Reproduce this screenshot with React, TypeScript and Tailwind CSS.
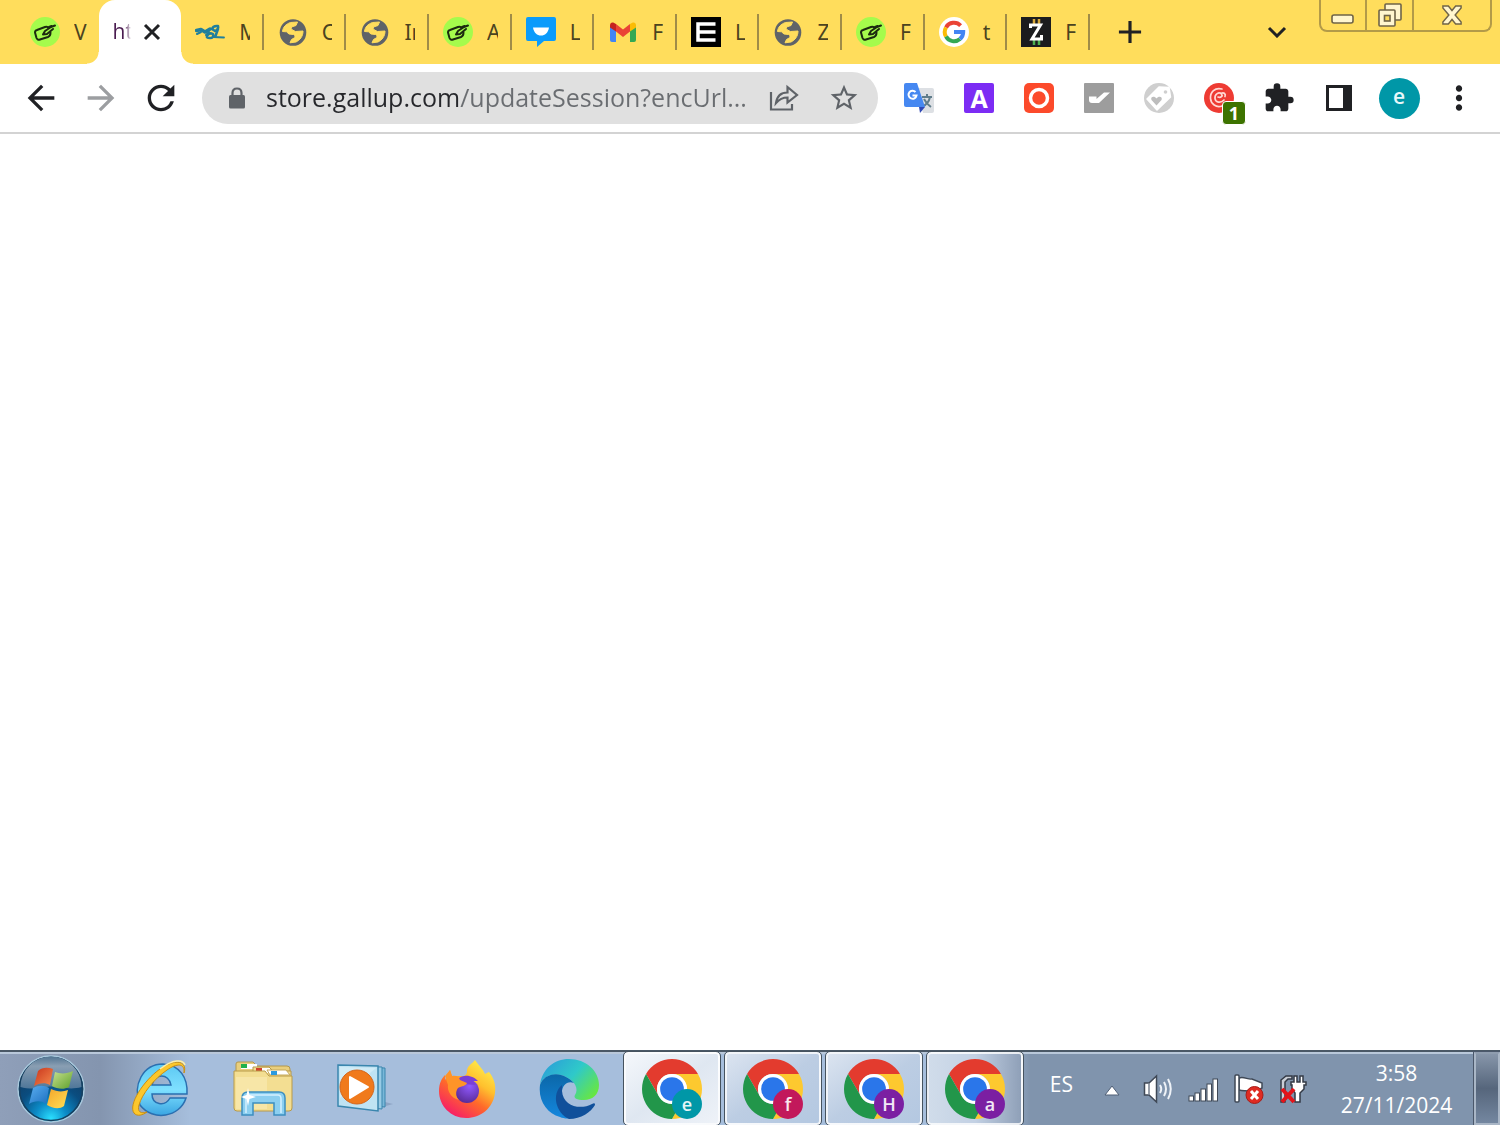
import { useState } from 'react';
import type { ReactNode } from 'react';
import { MdAdd, MdArrowBack, MdArrowForward, MdExtension, MdMoreVert, MdRefresh, MdStarBorder } from 'react-icons/md';

type IconName = 'hand' | 'wave' | 'globe' | 'chat' | 'gmail' | 'e' | 'google' | 'z';

type Tab = { id: number; icon?: IconName; title: string };

const TABS: Tab[] = [
  { id: 1, icon: 'hand', title: 'V' },
  { id: 2, title: 'ht' },
  { id: 3, icon: 'wave', title: 'M' },
  { id: 4, icon: 'globe', title: 'C' },
  { id: 5, icon: 'globe', title: 'In' },
  { id: 6, icon: 'hand', title: 'A' },
  { id: 7, icon: 'chat', title: 'L' },
  { id: 8, icon: 'gmail', title: 'F' },
  { id: 9, icon: 'e', title: 'L' },
  { id: 10, icon: 'globe', title: 'Z' },
  { id: 11, icon: 'hand', title: 'F' },
  { id: 12, icon: 'google', title: 't' },
  { id: 13, icon: 'z', title: 'F' },
];

const ACTIVE_TAB = 2;

const WINDOWS = [
  { letter: 'e', color: '#0097a7', bg: 'bg-linear-to-br from-[#f4f7fb] via-[#dfe7f1] to-[#eef2f8]' },
  { letter: 'f', color: '#c2185b', bg: 'bg-linear-to-br from-[#dbe4f0] via-[#bccde3] to-[#b4c8e1]' },
  { letter: 'H', color: '#7b1fa2', bg: 'bg-linear-to-br from-[#dbe4f0] via-[#bccde3] to-[#b4c8e1]' },
  { letter: 'a', color: '#7b1fa2', bg: 'bg-linear-to-r from-[#d0dcea] via-[#c3d1e4] to-[#8fa0b8]' },
];

function HandIcon() {
  return (
    <svg width="30" height="30" viewBox="0 0 30 30">
      <circle cx="15" cy="15" r="15" fill="#a5fb4c" />
      <path d="M5 15.500Q5 13.500 7 13L15 10Q17.500 9 18.500 11M5 15.500L6.500 21Q7.500 23.500 10 22.500L18 20Q20.500 19 20.500 15.500" fill="none" stroke="#1c2a10" strokeWidth="2" strokeLinecap="round" />
      <path d="M13 17.500L15 14L21 10L25 8.500M13 17.500L17 17L23 12M19 10L21.500 9" fill="none" stroke="#1c2a10" strokeWidth="2" strokeLinecap="round" strokeLinejoin="round" />
    </svg>
  );
}

function WaveIcon() {
  return (
    <svg width="30" height="30" viewBox="0 0 30 30" fill="none" stroke="#1f7f9c" strokeLinecap="round" strokeLinejoin="round">
      <path d="M1.500 13.500L6 12.500L10 15L15 12" strokeWidth="3.500" />
      <path d="M2 17L6 15M11 18L14 15" strokeWidth="2" />
      <path d="M12 19Q14 15 18 17Q19 21 15 21Q11 21 12 19M17 12Q18 8.500 23 9Q24 12 20 14L17 12M23 12L20.500 19" strokeWidth="2.500" />
      <path d="M18 20L29 20.500" strokeWidth="1.800" />
    </svg>
  );
}

function GlobeIcon() {
  return (
    <svg width="30" height="30" viewBox="0 0 30 30">
      <circle cx="15" cy="15.500" r="13.300" fill="#5f6368" />
      <path
        d="M12.500 5.500L19.500 5L18 8.500L13.500 10Q12.500 12 14.500 13L17.500 14.500L25 14C25 19.500 22 23 18 25L12 25.800L13.500 22.500L17 20.500Q17.500 18 15.500 17.500L11 17L8.500 14.800L4.500 14.500C5 10 8 7 12.500 5.500Z"
        fill="#ffdd5c"
        stroke="#ffdd5c"
        strokeLinejoin="round"
      />
    </svg>
  );
}

function ChatIcon() {
  return (
    <svg width="30" height="30" viewBox="0 0 30 30">
      <path d="M2 0H28Q30 0 30 2V22Q30 24 28 24H18L11 30V24H2Q0 24 0 22V2Q0 0 2 0Z" fill="#0a9bfb" />
      <path d="M7 10.500H23C22 16 19 18.500 15 18.500S8 16 7 10.500Z" fill="#fff" />
    </svg>
  );
}

function GmailIcon() {
  return (
    <svg width="30" height="30" viewBox="0 0 30 30">
      <path d="M2 8L8 12V25H4Q2 25 2 23Z" fill="#4285f4" />
      <path d="M28 8L22 12V25H26Q28 25 28 23Z" fill="#34a853" />
      <path d="M8 7L15 12.500L22 7V14.500L15 20L8 14.500Z" fill="#ea4335" />
      <path d="M2 8.500C2 5 5 4.500 8 7V14.500L2 10.500Z" fill="#c5221f" />
      <path d="M28 8.500C28 5 25 4.500 22 7V14.500L28 10.500Z" fill="#fbbc04" />
    </svg>
  );
}

function BarsIcon() {
  return (
    <svg width="30" height="30" viewBox="0 0 30 30">
      <rect width="30" height="30" fill="#000" />
      <path d="M24.500 7H7V23H24.500M7 15H24.500" fill="none" stroke="#fff" strokeWidth="3.500" />
    </svg>
  );
}

function GoogleIcon() {
  return (
    <svg width="30" height="30" viewBox="0 0 30 30">
      <circle cx="15" cy="15" r="15" fill="#fff" />
      <g fill="none" strokeWidth="4">
        <path d="M21.600 8.600A9.200 9.200 0 0 0 7 10.400" stroke="#ea4335" />
        <path d="M7 10.400A9.200 9.200 0 0 0 7 19.600" stroke="#fbbc05" />
        <path d="M7 19.600A9.200 9.200 0 0 0 21 22" stroke="#34a853" />
        <path d="M21 22A9.200 9.200 0 0 0 24.200 15H15" stroke="#4285f4" />
      </g>
    </svg>
  );
}

function ZIcon() {
  return (
    <svg width="30" height="30" viewBox="0 0 30 30">
      <rect width="30" height="30" fill="#1b1c1e" />
      <path d="M13 2V8M18 2V8" stroke="#d9a93a" strokeWidth="2.500" />
      <path d="M13 22V28M18 22V28" stroke="#4caf50" strokeWidth="2.500" />
      <path d="M9.500 11V8H19.500L11 22H20.500V18" fill="none" stroke="#fff" strokeWidth="3" />
    </svg>
  );
}

const TAB_ICONS: Record<IconName, () => ReactNode> = {
  hand: HandIcon,
  wave: WaveIcon,
  globe: GlobeIcon,
  chat: ChatIcon,
  gmail: GmailIcon,
  e: BarsIcon,
  google: GoogleIcon,
  z: ZIcon,
};

function TabStrip() {
  return (
    <header className="flex h-16 items-start bg-[#ffdd5c] pl-4 pr-2">
      <div role="tablist" className="flex h-full min-w-0 max-w-[1074px] flex-1">
        {TABS.map((tab) => {
          if (tab.id === ACTIVE_TAB) {
            return (
              <div
                key={tab.id}
                className="relative flex min-w-0 flex-1 items-stretch rounded-t-2xl bg-white before:absolute before:-left-3 before:bottom-0 before:size-3 before:bg-[radial-gradient(circle_at_0_0,transparent_11px,#fff_12px)] after:absolute after:-right-3 after:bottom-0 after:size-3 after:bg-[radial-gradient(circle_at_100%_0,transparent_11px,#fff_12px)]"
              >
                <div className="flex min-w-0 flex-1 items-center justify-between pl-3.5 pr-5">
                  <button role="tab" aria-selected="true" className="w-5 overflow-hidden whitespace-nowrap bg-linear-to-r from-[#4a1c50] from-60% to-transparent to-90% bg-clip-text text-left text-[21px] text-transparent">
                    {tab.title}
                  </button>
                  <button aria-label="Close tab">
                    <svg width="18" height="18" viewBox="0 0 18 18" className="block">
                      <path d="M2 2L16 16M16 2L2 16" stroke="#202124" strokeWidth="3" />
                    </svg>
                  </button>
                </div>
              </div>
            );
          }
          const Icon = TAB_ICONS[tab.icon ?? 'globe'];
          return (
            <div key={tab.id} className="flex min-w-0 flex-1 items-center">
              <button role="tab" aria-selected="false" className="flex min-w-0 flex-1 items-center gap-3.5 pl-3.5 pr-3">
                <span className="shrink-0">
                  <Icon />
                </span>
                <span className="min-w-0 flex-1 overflow-hidden whitespace-nowrap text-left font-['Noto_Sans',sans-serif] text-[21px] leading-8 text-[#4b4320]">{tab.title}</span>
              </button>
              {tab.id > ACTIVE_TAB && <span className="h-9 w-0.5 bg-[#a08c48]" />}
            </div>
          );
        })}
      </div>
      <button aria-label="New tab" className="flex h-full w-20 items-center justify-center text-[#202124]">
        <MdAdd size={38} />
      </button>
      <div className="ml-auto flex h-full items-start gap-3">
        <button aria-label="Search tabs" className="flex h-full w-15 items-center justify-center">
          <svg width="20" height="12" viewBox="0 0 20 12" fill="none" stroke="#202124" strokeWidth="3">
            <path d="M2 2L10 10L18 2" />
          </svg>
        </button>
        <div className="flex h-8 divide-x-2 divide-[#b39a48] overflow-hidden rounded-b-lg border-2 border-t-0 border-[#b39a48]">
          <button aria-label="Minimize" className="flex w-[46px] items-center justify-center pt-2">
            <svg width="24" height="10" viewBox="0 0 24 10">
              <rect x="1" y="1" width="21" height="8" rx="2" fill="#fff6cf" stroke="#6f6448" strokeWidth="1.600" />
            </svg>
          </button>
          <button aria-label="Restore" className="flex w-[47px] items-center justify-center">
            <svg width="26" height="26" viewBox="0 0 26 26" fill="#fff6cf" stroke="#6f6448" strokeWidth="1.600">
              <rect x="8" y="2" width="16" height="16" rx="1" />
              <rect x="2" y="8" width="16" height="16" rx="1" />
              <rect x="7.500" y="13.500" width="5.500" height="5.500" fill="#ffdd5c" />
            </svg>
          </button>
          <button aria-label="Close" className="flex w-[76px] items-center justify-center">
            <svg width="20" height="20" viewBox="0 0 22 20" preserveAspectRatio="none">
              <path d="M1 1H7L11 5.500L15 1H21V3L14.500 10L21 17V19H15L11 14.500L7 19H1V17L7.500 10L1 3Z" fill="#fff6cf" stroke="#6f6448" strokeWidth="1.600" />
            </svg>
          </button>
        </div>
      </div>
    </header>
  );
}

function ToolButton({ label, children }: { label: string; children: ReactNode }) {
  return (
    <button aria-label={label} className="flex h-13 w-15 shrink-0 items-center justify-center text-[#202124]">
      {children}
    </button>
  );
}

function Toolbar() {
  const [url, setUrl] = useState('store.gallup.com/updateSession?encUrl...');

  return (
    <nav className="flex items-center border-b-2 border-[#d3d3d3] px-[11px] py-2">
      <ToolButton label="Back">
        <MdArrowBack size={40} />
      </ToolButton>
      <ToolButton label="Forward">
        <MdArrowForward size={40} className="text-[#9c9ea1]" />
      </ToolButton>
      <ToolButton label="Reload">
        <MdRefresh size={40} />
      </ToolButton>

      <div className="mx-[11px] flex h-13 min-w-0 flex-1 items-center rounded-full bg-[#e0e0e0] pl-6.5 pr-1">
        <svg width="18" height="22" viewBox="0 0 18 22" className="shrink-0">
          <path d="M4.500 9V6Q4.500 1.500 9 1.500T13.500 6V9" fill="none" stroke="#5f6368" strokeWidth="2.200" />
          <rect x="1" y="8" width="16" height="13.500" rx="1.500" fill="#5f6368" />
        </svg>
        <input
          type="text"
          aria-label="Address and search bar"
          value={url}
          onChange={(e) => setUrl(e.target.value)}
          className="ml-5 min-w-0 flex-1 bg-[linear-gradient(90deg,#26272b_192px,#6a6d71_193px)] bg-clip-text text-[25px] text-transparent outline-none"
        />
        <ToolButton label="Share">
          <svg width="30" height="28" viewBox="0 0 30 28" fill="none" stroke="#5f6368" strokeWidth="2.200">
            <path d="M2 8V25.500H23V20" />
            <path d="M7 19C8 12 12 8.500 18.500 8.500V3L28 11L18.500 18.500V13.500C13 13.500 10 15.500 7 19Z" />
          </svg>
        </ToolButton>
        <ToolButton label="Bookmark">
          <MdStarBorder size={32} className="text-[#5f6368]" />
        </ToolButton>
      </div>

      <ToolButton label="Google Translate">
        <svg width="30" height="30" viewBox="0 0 30 30">
          <path d="M12 5H28Q30 5 30 7V28Q30 30 28 30H19Z" fill="#dde0e4" />
          <path d="M18 14H28M23 11V14M26 14C25 19 22 22 18 24M20 16C22 20 24 22 27 24" stroke="#607d8b" strokeWidth="2" fill="none" />
          <path d="M15 24H21L16 30Z" fill="#3049b5" />
          <path d="M2 0H13L21 24H2Q0 24 0 22V2Q0 0 2 0Z" fill="#4688f1" />
          <path d="M11.500 9A4 4 0 1 0 12.500 12.500H8.500" stroke="#fff" strokeWidth="2" fill="none" />
        </svg>
      </ToolButton>
      <ToolButton label="A">
        <span className="flex size-[30px] items-center justify-center rounded-xs bg-[#7c2cf4] text-[25px] font-bold leading-7 text-white">A</span>
      </ToolButton>
      <ToolButton label="Recorder">
        <svg width="30" height="30" viewBox="0 0 30 30">
          <rect width="30" height="30" rx="5" fill="#fc4a2b" />
          <circle cx="15" cy="15" r="8.500" fill="none" stroke="#fff" strokeWidth="3.500" />
        </svg>
      </ToolButton>
      <ToolButton label="Checker">
        <svg width="30" height="30" viewBox="0 0 30 30">
          <rect width="30" height="30" rx="1" fill="#9d9d9d" />
          <path d="M5 13.500H12.500V16L20 9.500H26L15 20H8Q5 20 5 17Z" fill="#fff" />
        </svg>
      </ToolButton>
      <ToolButton label="Price tag">
        <svg width="30" height="30" viewBox="0 0 30 30">
          <circle cx="15" cy="15" r="15" fill="#cfcfcf" />
          <path d="M15 4L25 4.500L26.500 14L13 27L3 16Z" fill="#fff" stroke="#fff" strokeWidth="1.500" strokeLinejoin="round" />
          <circle cx="21.500" cy="9" r="1.800" fill="#cfcfcf" />
          <path d="M12.500 22.500L7.500 17C6 13.500 10.500 12.500 12.500 15.500C14.500 12.500 19 13.500 17.500 17Z" fill="#bdbdbd" />
        </svg>
      </ToolButton>
      <ToolButton label="Swirl">
        <span className="relative">
          <svg width="30" height="30" viewBox="0 0 30 30" className="block">
            <circle cx="15" cy="15" r="15" fill="#ee3b33" />
            <path d="M18 6C11 4 6 9 6.500 15.500C7 21 12 25 18 23M14 14C17 15 19 13 17.500 11C15 8.500 10.500 11 11 15.500C11.500 20 17 20 20 17M17 10.500C20 9 22 11 21 13.500" fill="none" stroke="#ffd9d4" strokeWidth="1.700" strokeLinecap="round" />
          </svg>
          <span className="absolute -right-3 -bottom-3 flex size-6 items-center justify-center rounded-sm border border-white bg-[#3d7300] text-lg font-bold leading-5 text-white">1</span>
        </span>
      </ToolButton>
      <ToolButton label="Extensions">
        <MdExtension size={32} />
      </ToolButton>
      <ToolButton label="Side panel">
        <svg width="26" height="26" viewBox="0 0 26 26">
          <rect x="1.500" y="1.500" width="23" height="23" fill="#fff" stroke="#202124" strokeWidth="3" />
          <rect x="17" y="1" width="8" height="24" fill="#202124" />
        </svg>
      </ToolButton>
      <ToolButton label="Profile">
        <span className="flex size-[41px] items-center justify-center rounded-full bg-[#0097a7] pb-1 text-[21px] font-semibold leading-6 text-[#e9f8fa]">e</span>
      </ToolButton>
      <ToolButton label="Menu">
        <MdMoreVert size={38} />
      </ToolButton>
    </nav>
  );
}

function StartOrb() {
  return (
    <svg width="70" height="70" viewBox="0 0 70 70">
      <defs>
        <radialGradient id="orb" cx="50%" cy="95%" r="85%">
          <stop offset="0" stopColor="#2be0ff" />
          <stop offset=".28" stopColor="#0c8cc8" />
          <stop offset=".6" stopColor="#0a4d80" />
          <stop offset="1" stopColor="#123a5e" />
        </radialGradient>
        <linearGradient id="orbShine" x1="0" y1="0" x2="0" y2="1">
          <stop offset="0" stopColor="#5d7f9c" />
          <stop offset=".3" stopColor="#9fb0c1" />
          <stop offset="1" stopColor="#5b7f9f" />
        </linearGradient>
        <linearGradient id="flagRed" x1="0" y1="0" x2="1" y2="1">
          <stop offset="0" stopColor="#c9341c" />
          <stop offset="1" stopColor="#f58a4c" />
        </linearGradient>
        <linearGradient id="flagGreen" x1="0" y1="0" x2="1" y2="1">
          <stop offset="0" stopColor="#c9e28e" />
          <stop offset="1" stopColor="#5da02c" />
        </linearGradient>
        <linearGradient id="flagBlue" x1="0" y1="0" x2="1" y2="1">
          <stop offset="0" stopColor="#5aaef0" />
          <stop offset="1" stopColor="#1c6fc0" />
        </linearGradient>
        <linearGradient id="flagYellow" x1="0" y1="0" x2="1" y2="1">
          <stop offset="0" stopColor="#f4a52a" />
          <stop offset="1" stopColor="#ffe057" />
        </linearGradient>
      </defs>
      <circle cx="35" cy="35" r="33" fill="url(#orb)" stroke="#a9c9dd" strokeWidth="1.500" />
      <circle cx="35" cy="35" r="31.500" fill="none" stroke="#17405f" strokeWidth="1.500" />
      <path d="M4.500 33A30.500 30.500 0 0 1 65.500 33C52 37 40 31 31 33C21 35 12 35 4.500 33Z" fill="url(#orbShine)" opacity=".85" />
      <path d="M22 17C26 13 32 13 37 15L34 31C29 28 23 29 18 32Z" fill="url(#flagRed)" />
      <path d="M39 18C44 20 51 20 57 17L53 33C48 36 41 35 36 32Z" fill="url(#flagGreen)" />
      <path d="M17 34C23 31 28 31 33 34L30 50C25 46 18 47 13 50Z" fill="url(#flagBlue)" />
      <path d="M35 35C41 38 47 38 52 36L48 52C43 56 36 54 31 51Z" fill="url(#flagYellow)" />
    </svg>
  );
}

function ExplorerLogo() {
  return (
    <svg width="60" height="60" viewBox="2 0 60 60" fill="none">
      <defs>
        <linearGradient id="ie" x1="0" y1="0" x2="0" y2="1">
          <stop offset="0" stopColor="#5cc8f2" />
          <stop offset=".5" stopColor="#7fe0ff" />
          <stop offset="1" stopColor="#3aa5e2" />
        </linearGradient>
      </defs>
      <path d="M58 35H23C23 46 36 48 41 39H57C51 58 24 63 11 46C3 26 14 5 34 5C51 6 59 19 58 35ZM23 26H42C40 14 25 14 23 26Z" fill="url(#ie)" stroke="#2a6fb0" strokeWidth="1.500" />
      <path d="M55 14C59 2 46 -1 31 10C14 22 -1 46 5 54C8 58 14 56 18 53C12 55 8 53 10 46C13 35 25 20 38 11C48 4 56 4 55 14Z" fill="#fcc72c" stroke="#c98f14" strokeWidth="1" />
      <path d="M31 10C44 0 54 0 56 6" stroke="#fff0a8" strokeWidth="1.500" />
    </svg>
  );
}

function FolderIcon() {
  return (
    <svg width="60" height="56" viewBox="0 0 60 56">
      <path d="M3 3Q3 1 5 1H20L24 5H54Q57 5 57 8V12H3Z" fill="#e9cf7d" stroke="#b3974c" />
      <rect x="8" y="3" width="16" height="5" fill="#fff" />
      <rect x="8" y="3" width="6" height="4" fill="#22b14c" />
      <path d="M20 6H36L40 10H58V16H20Z" fill="#f3dd92" stroke="#b3974c" />
      <rect x="23" y="7" width="14" height="5" fill="#fff" />
      <rect x="23" y="7" width="6" height="4" fill="#d0402b" />
      <path d="M1 10H32L36 15H59V47Q59 50 56 50H4Q1 50 1 47Z" fill="#f3de92" stroke="#b89a48" />
      <path d="M34 9H53L57 14H37Z" fill="#fff" stroke="#c5a95c" />
      <rect x="38" y="10" width="6" height="4" fill="#2a9ae0" />
      <path d="M3 16H34V48H3Z" fill="#fbeebb" opacity=".5" />
      <path d="M9 54V37Q9 31 15 31H46Q52 31 52 37V54H41V42H20V54Z" fill="#8ccff0" stroke="#3c8fc0" strokeWidth="1.500" />
      <path d="M13 52V37Q13 34 17 34H45Q48 34 48 38V52" fill="none" stroke="#d3f1ff" strokeWidth="1.500" />
      <path d="M15 27L16.500 34L23 36L16.500 38L15 45L13.500 38L8 36L13.500 34Z" fill="#fff" />
    </svg>
  );
}

function MediaPlayerIcon() {
  return (
    <svg width="56" height="50" viewBox="0 0 56 50">
      <path d="M42 44L56 40L48 38Z" fill="#7d94b5" opacity=".6" />
      <path d="M10 3L48 4V43L10 40Z" fill="#79b7d8" stroke="#3a86ae" />
      <path d="M6 2L45 3V45L6 41Z" fill="#98cbe5" stroke="#3a86ae" />
      <path d="M1 1L41 2V47L1 42Z" fill="#bfe3f3" stroke="#3a86ae" strokeWidth="1.500" />
      <path d="M3 3L39 4L3 34Z" fill="#e3f5fc" opacity=".5" />
      <circle cx="20" cy="23" r="17" fill="#f07a1c" stroke="#d4651a" />
      <path d="M13 13V34L31 23Z" fill="#fff" stroke="#fff" strokeWidth="2" strokeLinejoin="round" />
    </svg>
  );
}

function FirefoxIcon() {
  return (
    <svg width="58" height="60" viewBox="0 0 58 60">
      <defs>
        <linearGradient id="fox" x1=".85" y1="0" x2=".2" y2="1">
          <stop offset="0" stopColor="#fff44f" />
          <stop offset=".35" stopColor="#ffc02e" />
          <stop offset=".6" stopColor="#ff6a2a" />
          <stop offset="1" stopColor="#f5136f" />
        </linearGradient>
        <radialGradient id="foxCore" cx=".6" cy=".3" r=".7">
          <stop offset="0" stopColor="#9059ff" />
          <stop offset="1" stopColor="#5b2d9a" />
        </radialGradient>
      </defs>
      <path d="M37 1C41 7 45 10 47 15C49 14 50 13 51 13C56 19 58 26 57 34C55 49 43 59 28 59C13 59 1 47 1 32C1 24 4 19 7 16V21L12 11L14 17H24C28 17 29 15 29 11C30 6 35 4 37 1Z" fill="url(#fox)" />
      <circle cx="29" cy="32" r="12" fill="url(#foxCore)" />
      <path d="M20 20C26 14 36 17 40 22L35 22L38 26L26 25Z" fill="#7a3fd6" />
      <path d="M7 17L12 11L14 17C18 16 21 18 22 21L29 24C28 27 24 27 20 29C17 33 18 38 21 41C13 39 9 32 10 26Z" fill="#ff9428" />
    </svg>
  );
}

function EdgeIcon() {
  return (
    <svg width="60" height="60" viewBox="0 0 60 60">
      <defs>
        <linearGradient id="edgeTop" x1="0" y1=".2" x2="1" y2=".8">
          <stop offset="0" stopColor="#2b9fd8" />
          <stop offset=".5" stopColor="#2fc9c9" />
          <stop offset="1" stopColor="#6ae83c" />
        </linearGradient>
        <linearGradient id="edgeLeft" x1="0" y1="0" x2="0" y2="1">
          <stop offset="0" stopColor="#0b67a8" />
          <stop offset="1" stopColor="#1487de" />
        </linearGradient>
      </defs>
      <path d="M1 26C3 10 15 0 30 0C47 0 60 12 60 26C60 36 53 41 45 41C38 41 34 39 36 36C40 30 36 22 27 18C17 13 4 16 1 26Z" fill="url(#edgeTop)" />
      <path d="M1 26C4 16 17 12 27 18C31 20 33 22 35 24C28 21 22 27 23 36C24 45 34 52 45 50C38 60 28 61 21 58C8 54 -1 42 1 26Z" fill="url(#edgeLeft)" />
      <path d="M23 26C12 35 17 54 30 60C42 60 52 53 56 46C56 44 55 44 53 45C42 51 24 48 23 32Z" fill="#10509b" />
    </svg>
  );
}

function ChromeIcon({ letter, color }: { letter: string; color: string }) {
  return (
    <span className="relative block">
      <svg width="60" height="60" viewBox="2 2 44 44" className="block">
        <path d="M24 13H43.050A22 22 0 0 0 4.950 13L14.470 29.500A11 11 0 0 1 24 13Z" fill="#e33b2e" />
        <path d="M43.050 13A22 22 0 0 1 24 46L33.530 29.500A11 11 0 0 0 24 13Z" fill="#fdc92f" />
        <path d="M24 46A22 22 0 0 1 4.950 13L14.470 29.500A11 11 0 0 0 33.530 29.500Z" fill="#22964a" />
        <circle cx="24" cy="24" r="11" fill="#fff" />
        <circle cx="24" cy="24" r="8.700" fill="#2a76ea" />
      </svg>
      <span className="absolute right-0 bottom-0 flex size-[30px] items-center justify-center rounded-full text-lg font-semibold leading-none text-white/90" style={{ backgroundColor: color }}>
        {letter}
      </span>
    </span>
  );
}

function Tray() {
  return (
    <div className="ml-auto flex items-stretch text-[21px] text-white">
      <div className="flex items-center gap-[15px]">
        <button className="mr-2 pb-2">ES</button>
        <button aria-label="Show hidden icons" className="flex w-8 items-center justify-center pt-1">
          <svg width="18" height="12" viewBox="0 0 18 12">
            <path d="M9 1L16 10H2Z" fill="#fff" stroke="#4f5f76" />
          </svg>
        </button>
        <button aria-label="Volume">
          <svg width="30" height="30" viewBox="0 0 30 30" className="block">
            <path d="M1.500 9H6L13.500 2V28L6 21H1.500Z" fill="#fff" stroke="#3f4856" strokeWidth="1.500" />
            <path d="M6 9V21" stroke="#77818f" strokeWidth="1.500" />
            <path d="M17 11Q19.500 15 17 19M21 8Q25 15 21 22M25 5Q30.500 15 25 25" fill="none" stroke="#eef2f7" strokeWidth="2" />
          </svg>
        </button>
        <button aria-label="Network">
          <svg width="31" height="26" viewBox="0 0 31 26" fill="#fff" stroke="#3f4856" className="block">
            <rect x="1" y="20" width="4.500" height="5" />
            <rect x="7" y="17" width="4.500" height="8" />
            <rect x="13" y="13" width="4.500" height="12" />
            <rect x="19" y="8" width="4.500" height="17" />
            <rect x="25" y="3" width="4.500" height="22" />
          </svg>
        </button>
        <button aria-label="Action center">
          <svg width="30" height="30" viewBox="0 0 30 30" className="block">
            <path d="M5 4C10 2 14 6 18 5L28 9V14L19 19C14 15 10 18 5 16Z" fill="#fff" stroke="#3f4856" strokeWidth="1.500" />
            <rect x="1" y="1" width="4" height="27" rx="1" fill="#fff" stroke="#3f4856" strokeWidth="1.500" />
            <circle cx="20.500" cy="21" r="8.500" fill="#df2b22" stroke="#a81d18" />
            <path d="M17 17L24 25M24 17L17 25" stroke="#fff" strokeWidth="3" />
          </svg>
        </button>
        <button aria-label="Power">
          <svg width="28" height="30" viewBox="0 0 28 30" className="block">
            <path d="M2 28V6L7 2H13V5H9L6 8V28Z" fill="#c9ced6" stroke="#333a45" strokeWidth="1.500" />
            <path d="M12 8H15V2H18V8H21V2H24V8H27V11H25V15L21 19V28H16V19L13 15V11H12Z" fill="#fff" stroke="#333a45" strokeWidth="1.500" />
            <path d="M3 15L15 28M15 15L3 28" stroke="#e3141a" strokeWidth="4" />
          </svg>
        </button>
      </div>
      <button className="w-[167px] pl-3 text-center leading-8">
        <time className="block">3:58</time>
        <time className="block">27/11/2024</time>
      </button>
      <button aria-label="Show desktop" className="w-6.5 border-2 border-[#a9b6c6] border-t-[#8f9daf] bg-linear-to-b from-[#8796aa] via-[#56667c] to-[#7487a0] outline outline-[#4b586b]" />
    </div>
  );
}

const PINNED = [
  { label: 'Internet Explorer', Icon: ExplorerLogo },
  { label: 'Windows Explorer', Icon: FolderIcon },
  { label: 'Windows Media Player', Icon: MediaPlayerIcon },
  { label: 'Firefox', Icon: FirefoxIcon },
  { label: 'Edge', Icon: EdgeIcon },
];

function Taskbar() {
  return (
    <footer className="flex h-[75px] items-stretch border-t-2 border-[#4a5866] bg-[linear-gradient(90deg,#8f9fb9_0,#8495af_100px,#a6bedc_190px,#a6bedc_1000px,#8094ad_1030px)] shadow-[inset_0_2px_0_#b9c8da]">
      <button aria-label="Start" className="flex w-[110px] items-center pl-4">
        <StartOrb />
      </button>
      {PINNED.map(({ label, Icon }) => (
        <button key={label} aria-label={label} className="flex w-[102px] items-center justify-center">
          <Icon />
        </button>
      ))}
      <div className="flex gap-[5px] pl-1">
        {WINDOWS.map((win, i) => (
          <button key={i} aria-label={`Chrome window ${i + 1}`} className={`flex w-24 items-center justify-center rounded-sm border-2 border-white/80 outline outline-[#46535f] ${win.bg}`}>
            <ChromeIcon letter={win.letter} color={win.color} />
          </button>
        ))}
      </div>
      <Tray />
    </footer>
  );
}

export default function App() {
  return (
    <div className="flex min-h-screen flex-col bg-white font-['Open_Sans','Noto_Sans',sans-serif]">
      <TabStrip />
      <Toolbar />
      <main className="flex-1" />
      <Taskbar />
    </div>
  );
}
